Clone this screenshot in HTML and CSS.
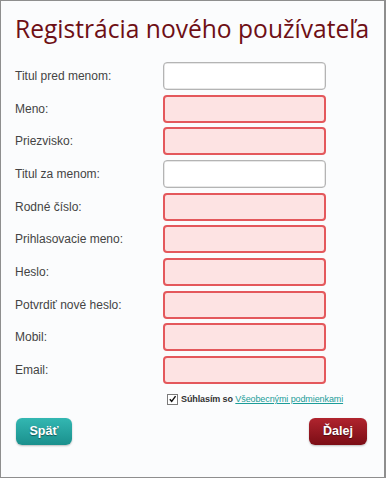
FILE: index.html
```html
<!DOCTYPE html>
<html lang="sk">
<head>
<meta charset="utf-8">
<title>Registrácia nového používateľa</title>
<link rel="stylesheet" href="styles.css">
</head>
<body>
<div class="frame">
  <h1 class="title">Registrácia nového používateľa</h1>
  <form class="form">
    <label class="label">Titul pred menom:</label><input class="field" type="text">
    <label class="label">Meno:</label><input class="field field-error" type="text">
    <label class="label">Priezvisko:</label><input class="field field-error" type="text">
    <label class="label">Titul za menom:</label><input class="field" type="text">
    <label class="label">Rodné číslo:</label><input class="field field-error" type="text">
    <label class="label">Prihlasovacie meno:</label><input class="field field-error" type="text">
    <label class="label">Heslo:</label><input class="field field-error" type="password">
    <label class="label">Potvrdiť nové heslo:</label><input class="field field-error" type="password">
    <label class="label">Mobil:</label><input class="field field-error" type="text">
    <label class="label">Email:</label><input class="field field-error" type="text">
    <div class="agree">
      <span class="check"><svg viewBox="0 0 10 10" width="10" height="10"><path d="M2 5.2 L4.1 7.6 L8.4 1.8" fill="none" stroke="#111" stroke-width="1.6"/></svg></span>
      <span class="agree-text">Súhlasím so <a class="agree-link" href="#">Všeobecnými podmienkami</a></span>
    </div>
  </form>
  <div class="actions">
    <button class="btn btn-back" type="button">Späť</button>
    <button class="btn btn-next" type="button">Ďalej</button>
  </div>
</div>
</body>
</html>
```
FILE: styles.css
```css
html, body {
  margin: 0;
  padding: 0;
}
body {
  width: 386px;
  height: 478px;
  background: #ffffff;
}
.frame {
  box-sizing: border-box;
  width: 386px;
  height: 478px;
  border: 1px solid #8e8e8e;
  border-right-width: 2px;
  background: #fbfcfd;
  padding: 0 17px 0 14px;
  display: flex;
  flex-direction: column;
}
.title {
  margin: 12px 0 0 0;
  font-family: "Open Sans", sans-serif;
  font-weight: 400;
  font-size: 24.6px;
  line-height: 32px;
  color: #6e0f15;
  white-space: nowrap;
}
.form {
  margin-top: 17px;
  display: grid;
  grid-template-columns: 148px 163px;
  row-gap: 4.67px;
  align-items: center;
}
.label {
  font-family: "Liberation Sans", Arial, sans-serif;
  font-size: 12px;
  color: #444444;
}
.field {
  box-sizing: border-box;
  height: 28px;
  width: 163px;
  margin: 0;
  border: 1px solid #b4b4b4;
  border-radius: 4px;
  background: #ffffff;
  box-shadow: inset 0 0 0 0.5px #d0d0d0;
}
.field-error {
  border: 2px solid #e4585c;
  background: #fde3e3;
  box-shadow: none;
}
.agree {
  grid-column: 2;
  margin-top: 5px;
  display: flex;
  align-items: center;
  gap: 3px;
  padding-left: 4px;
  font-family: "Liberation Sans", Arial, sans-serif;
  font-size: 9px;
  color: #333333;
  white-space: nowrap;
}
.check {
  box-sizing: border-box;
  width: 11px;
  height: 11px;
  border: 1px solid #7a7a7a;
  background: #ffffff;
  display: flex;
  align-items: center;
  justify-content: center;
}
.agree-text {
  font-weight: 700;
  letter-spacing: -0.1px;
}
.agree-link {
  color: #1c9d99;
  text-decoration: underline;
  font-weight: 400;
}
.actions {
  margin-top: 13px;
  display: flex;
  justify-content: space-between;
  padding-left: 1px;
}
.btn {
  height: 27px;
  border: none;
  border-radius: 6px;
  font-family: "Liberation Sans", Arial, sans-serif;
  font-weight: 700;
  font-size: 12.5px;
  color: #ffffff;
  text-shadow: 0 1px 1px rgba(0, 0, 0, 0.45);
  padding: 0;
  box-shadow: 0 1px 2px rgba(0, 0, 0, 0.25);
}
.btn-back {
  width: 56px;
  background: linear-gradient(#33b7b2, #1a908d);
}
.btn-next {
  width: 58px;
  background: linear-gradient(#b0242e, #7b0d15);
}
```
